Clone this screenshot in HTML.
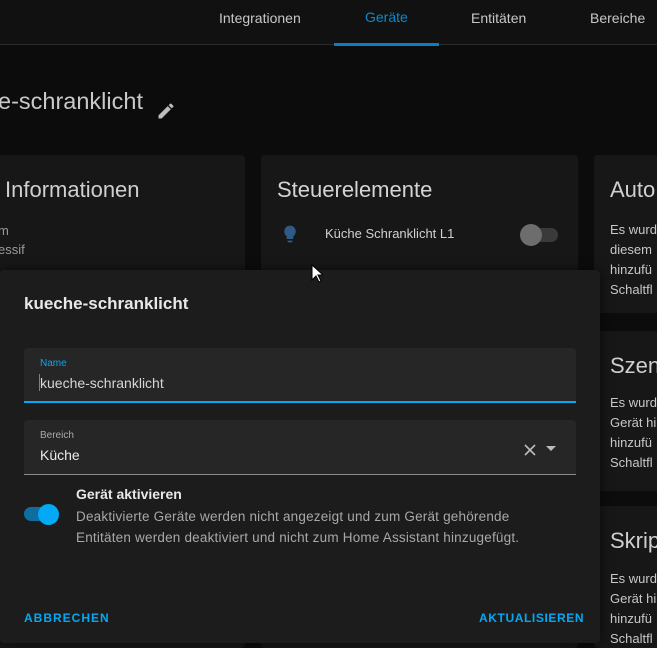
<!DOCTYPE html>
<html style="overflow:hidden;height:648px"><head><meta charset="utf-8"><style>
*{margin:0;padding:0;box-sizing:border-box}
body{width:657px;height:648px;overflow:hidden;background:#0c0c0c;font-family:"Liberation Sans",sans-serif;position:relative;color:#e1e1e1}
.a{position:absolute;white-space:nowrap}
.card{position:absolute;background:#171717;border-radius:4px}
</style></head><body>
<div class="a" style="left:0;top:0;width:657px;height:45px;background:#111;border-bottom:1px solid #2a2a2a"></div>
<div class="a" style="left:219px;top:10px;font-size:14px;color:#c8c8c8">Integrationen</div>
<div class="a" style="left:365px;top:9px;font-size:14px;color:#0a8ad0">Geräte</div>
<div class="a" style="left:471px;top:10px;font-size:14px;color:#c8c8c8">Entitäten</div>
<div class="a" style="left:590px;top:10px;font-size:14px;color:#c8c8c8">Bereiche</div>
<div class="a" style="left:334px;top:43px;width:105px;height:3px;background:#0a7fc0"></div>

<div class="a" style="left:-2px;top:88px;font-size:23.5px;color:#c9c9c9">e-schranklicht</div>
<svg class="a" style="left:156px;top:101px" width="20" height="20" viewBox="0 0 24 24"><path fill="#bdbdbd" d="M3 17.25V21h3.75L17.81 9.94l-3.75-3.75L3 17.25zM20.71 7.04a1 1 0 0 0 0-1.41l-2.34-2.34a1 1 0 0 0-1.41 0l-1.83 1.83 3.75 3.75 1.83-1.83z"/></svg>

<div class="card" style="left:-10px;top:155px;width:255px;height:493px"></div>
<div class="a" style="left:5px;top:177px;font-size:22px;color:#cfcfcf">Informationen</div>
<div class="a" style="left:-2px;top:223px;font-size:13px;color:#9a9a9a">m</div>
<div class="a" style="left:-2px;top:242px;font-size:13px;color:#9a9a9a">essif</div>

<div class="card" style="left:261px;top:155px;width:317px;height:493px"></div>
<div class="a" style="left:277px;top:177px;font-size:22px;color:#d4d4d4">Steuerelemente</div>
<svg class="a" style="left:280px;top:223px" width="20" height="22" viewBox="0 0 24 24"><path fill="#2f5a86" d="M12 2a7 7 0 0 0-4 12.7V17a1 1 0 0 0 1 1h6a1 1 0 0 0 1-1v-2.3A7 7 0 0 0 12 2zM9 21a1 1 0 0 0 1 1h4a1 1 0 0 0 1-1v-1H9v1z"/></svg>
<div class="a" style="left:325px;top:226px;font-size:13px;color:#d0d0d0">Küche Schranklicht L1</div>
<div class="a" style="left:522px;top:228px;width:36px;height:14px;border-radius:7px;background:#3a3a3a"></div>
<div class="a" style="left:520px;top:224px;width:22px;height:22px;border-radius:50%;background:#6d6d6d"></div>

<div class="card" style="left:594px;top:155px;width:80px;height:158px"></div>
<div class="a" style="left:610px;top:177px;font-size:22px;color:#cfcfcf">Auto</div>
<div class="a" style="left:610px;top:220px;font-size:13px;line-height:20px;color:#c8c8c8">Es wurd<br>diesem<br>hinzufü<br>Schaltfl</div>
<div class="card" style="left:594px;top:331px;width:80px;height:160px"></div>
<div class="a" style="left:610px;top:353px;font-size:22px;color:#cfcfcf">Szen</div>
<div class="a" style="left:610px;top:393px;font-size:13px;line-height:20px;color:#c8c8c8">Es wurd<br>Gerät hi<br>hinzufü<br>Schaltfl</div>
<div class="card" style="left:594px;top:506px;width:80px;height:142px"></div>
<div class="a" style="left:610px;top:528px;font-size:22px;color:#cfcfcf">Skrip</div>
<div class="a" style="left:610px;top:569px;font-size:13px;line-height:20px;color:#c8c8c8">Es wurd<br>Gerät hi<br>hinzufü<br>Schaltfl</div>

<div class="a" style="left:0;top:270px;width:600px;height:373px;background:#1c1c1c;border-radius:4px;box-shadow:0 0 12px rgba(0,0,0,.6)"></div>
<div class="a" style="left:24px;top:294px;font-size:17px;font-weight:bold;color:#e8e8e8">kueche-schranklicht</div>
<div class="a" style="left:24px;top:348px;width:552px;height:55px;background:#262626;border-radius:4px 4px 0 0;border-bottom:2px solid #03a9f4"></div>
<div class="a" style="left:40px;top:358px;font-size:10px;color:#03a9f4">Name</div>
<div class="a" style="left:40px;top:375px;font-size:14px;color:#d6d6d6">kueche-schranklicht</div>
<div class="a" style="left:39px;top:374px;width:1px;height:17px;background:#03a9f4"></div>
<div class="a" style="left:24px;top:420px;width:552px;height:55px;background:#262626;border-radius:4px 4px 0 0;border-bottom:1px solid #8a8a8a"></div>
<div class="a" style="left:40px;top:430px;font-size:10px;color:#aaa">Bereich</div>
<div class="a" style="left:40px;top:447px;font-size:14px;color:#ececec">Küche</div>
<svg class="a" style="left:522px;top:442px" width="16" height="16" viewBox="0 0 16 16"><path stroke="#bbb" stroke-width="1.6" d="M3 3l10 10M13 3L3 13"/></svg>
<svg class="a" style="left:545px;top:444px" width="12" height="10" viewBox="0 0 12 10"><path fill="#bbb" d="M1 2h10L6 7z"/></svg>
<div class="a" style="left:24px;top:507px;width:34px;height:14px;border-radius:7px;background:#0f6da0"></div>
<div class="a" style="left:38px;top:504px;width:21px;height:21px;border-radius:50%;background:#03a9f4"></div>
<div class="a" style="left:76px;top:486px;font-size:14px;font-weight:bold;color:#e8e8e8">Gerät aktivieren</div>
<div class="a" style="left:76px;top:506px;font-size:13.5px;line-height:21px;color:#a8a8a8;letter-spacing:0.2px">Deaktivierte Geräte werden nicht angezeigt und zum Gerät gehörende<br>Entitäten werden deaktiviert und nicht zum Home Assistant hinzugefügt.</div>
<div class="a" style="left:24px;top:611px;font-size:12px;font-weight:bold;letter-spacing:1px;color:#03a9f4">ABBRECHEN</div>
<div class="a" style="left:479px;top:611px;font-size:12px;font-weight:bold;letter-spacing:0.6px;color:#03a9f4">AKTUALISIEREN</div>
<svg class="a" style="left:311px;top:264px" width="12" height="20" viewBox="0 0 12 20"><path fill="#fff" stroke="#000" stroke-width="1" d="M1 1v15l4-4 3 6 2-1-3-6h5z"/></svg>
</body></html>
